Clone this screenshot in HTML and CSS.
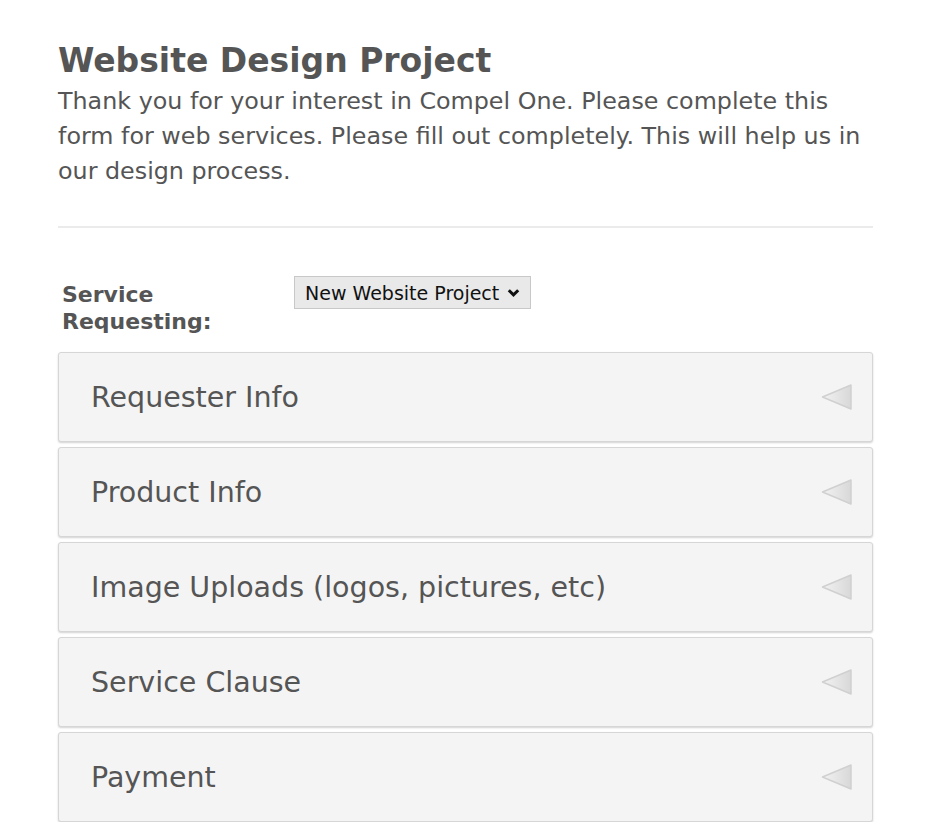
FILE: index.html
```html
<!DOCTYPE html>
<html>
<head>
<meta charset="utf-8">
<link rel="stylesheet" href="styles.css">
</head>
<body>
<div class="page">
  <h1 class="title">Website Design Project</h1>
  <p class="intro">Thank you for your interest in Compel One. Please complete this form for web services. Please fill out completely. This will help us in our design process.</p>
  <hr class="rule">
  <div class="field">
    <label class="field-label">Service Requesting:</label>
    <div class="select">New Website Project <svg class="chev" width="13" height="10" viewBox="0 0 13 10"><path d="M1.8 2.2 L6.5 6.9 L11.2 2.2" fill="none" stroke="#111" stroke-width="3"/></svg></div>
  </div>
  <div class="panels">
    <div class="panel"><span class="panel-title">Requester Info</span><svg class="tri" width="32" height="28" viewBox="0 0 32 28"><defs><linearGradient id="g" x1="0" y1="0" x2="1" y2="0"><stop offset="0" stop-color="#f2f2f2"/><stop offset="1" stop-color="#d8d8d8"/></linearGradient></defs><path d="M1.5 14 L30 2 L30 26 Z" fill="url(#g)" stroke="#d0d0d0" stroke-width="1.5" stroke-linejoin="round"/></svg></div>
    <div class="panel"><span class="panel-title">Product Info</span><svg class="tri" width="32" height="28" viewBox="0 0 32 28"><path d="M1.5 14 L30 2 L30 26 Z" fill="url(#g)" stroke="#d0d0d0" stroke-width="1.5" stroke-linejoin="round"/></svg></div>
    <div class="panel"><span class="panel-title">Image Uploads (logos, pictures, etc)</span><svg class="tri" width="32" height="28" viewBox="0 0 32 28"><path d="M1.5 14 L30 2 L30 26 Z" fill="url(#g)" stroke="#d0d0d0" stroke-width="1.5" stroke-linejoin="round"/></svg></div>
    <div class="panel"><span class="panel-title">Service Clause</span><svg class="tri" width="32" height="28" viewBox="0 0 32 28"><path d="M1.5 14 L30 2 L30 26 Z" fill="url(#g)" stroke="#d0d0d0" stroke-width="1.5" stroke-linejoin="round"/></svg></div>
    <div class="panel"><span class="panel-title">Payment</span><svg class="tri" width="32" height="28" viewBox="0 0 32 28"><path d="M1.5 14 L30 2 L30 26 Z" fill="url(#g)" stroke="#d0d0d0" stroke-width="1.5" stroke-linejoin="round"/></svg></div>
  </div>
</div>
</body>
</html>
```
FILE: styles.css
```css
html, body {
  margin: 0;
  padding: 0;
  background: #fff;
}
body {
  font-family: "DejaVu Sans", Verdana, sans-serif;
  color: #555;
}
.page {
  width: 815px;
  margin-left: 58px;
  padding-top: 38px;
}
.title {
  margin: 0;
  font-size: 33px;
  font-weight: bold;
  line-height: 46px;
  color: #555;
}
.intro {
  margin: 0;
  font-size: 23.8px;
  line-height: 35px;
  color: #555;
}
.rule {
  margin: 37px 0 0 0;
  border: 0;
  border-top: 2px solid #ebebeb;
  height: 0;
}
.field {
  display: flex;
  align-items: flex-start;
  margin-top: 48px;
  padding-left: 4px;
}
.field-label {
  width: 232px;
  font-size: 22px;
  font-weight: bold;
  line-height: 27px;
  padding-top: 5px;
}
.select {
  display: flex;
  align-items: center;
  gap: 8px;
  height: 31px;
  padding: 0 10px;
  background: #e9e9e9;
  border: 1px solid #c8c8c8;
  font-size: 19px;
  color: #111;
}
.chev {
  margin-top: 1px;
}
.panels {
  display: flex;
  flex-direction: column;
  gap: 5px;
  margin-top: 17px;
}
.panel {
  display: flex;
  align-items: center;
  justify-content: space-between;
  height: 88px;
  padding: 0 19px 0 32px;
  background: #f4f4f4;
  border: 1px solid #d6d6d6;
  border-radius: 3px;
  box-shadow: 0 1px 2px rgba(0,0,0,0.18);
}
.panel-title {
  font-size: 28.5px;
  color: #555;
}
.tri {
  display: block;
}
```
